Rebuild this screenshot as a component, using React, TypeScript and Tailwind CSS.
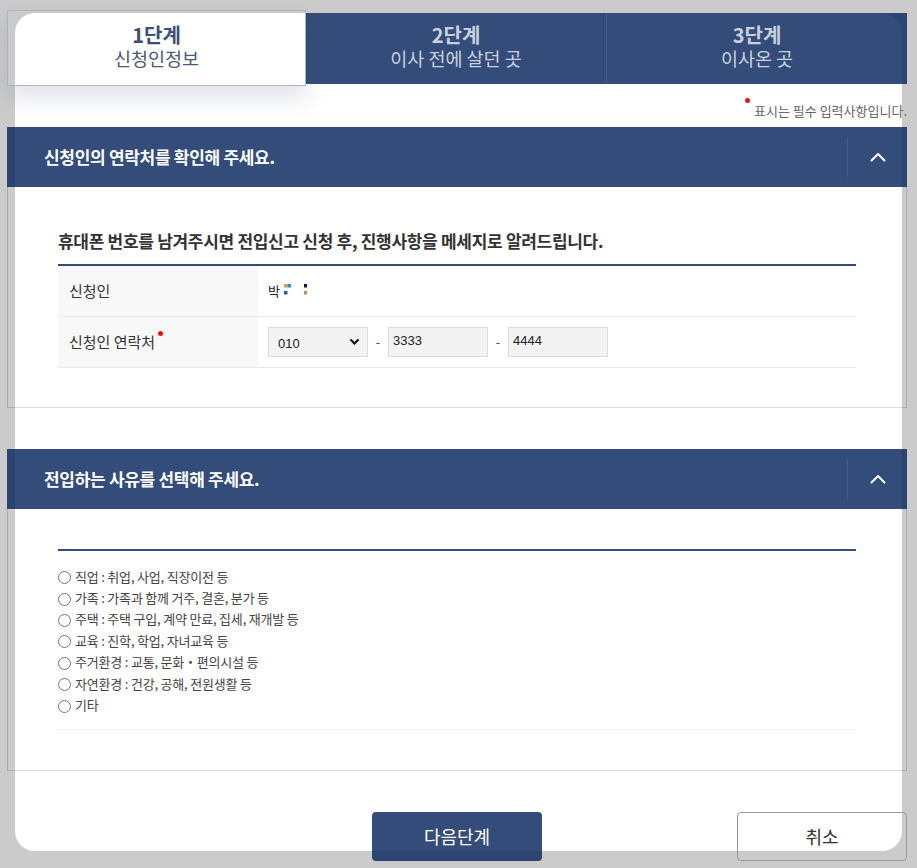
import React from "react";

const reasons = [
  "직업 : 취업, 사업, 직장이전 등",
  "가족 : 가족과 함께 거주, 결혼, 분가 등",
  "주택 : 주택 구입, 계약 만료, 집세, 재개발 등",
  "교육 : 진학, 학업, 자녀교육 등",
  "주거환경 : 교통, 문화・편의시설 등",
  "자연환경 : 건강, 공해, 전원생활 등",
  "기타",
];

function Chevron() {
  return (
    <svg width="16" height="10" viewBox="0 0 16 10" fill="none">
      <polyline points="1.5,8.5 8,2 14.5,8.5" stroke="white" strokeWidth="2" strokeLinecap="round" strokeLinejoin="round" />
    </svg>
  );
}

function SectionHeader({ title }: { title: string }) {
  return (
    <div className="h-[60px] bg-[rgba(15,45,97,0.85)] flex items-center">
      <h2 className="flex-1 pl-[37px] text-white text-[17px] font-bold tracking-[-0.3px] leading-[24px]">{title}</h2>
      <div className="w-px h-[40px] bg-white/10" />
      <button className="w-[59px] h-full flex items-center justify-center">
        <Chevron />
      </button>
    </div>
  );
}

function Tab({ step, label, first, divider }: { step: string; label: string; first?: boolean; divider?: boolean }) {
  if (first) {
    return (
      <div className="relative w-[299px] flex flex-col items-center pt-[10px]">
        <div className="absolute left-0 right-0 top-[-3px] bottom-[-2px] border border-[#aab3c4] shadow-[0_12px_22px_rgba(60,80,120,0.16)]" />
        <span className="relative text-[20px] font-bold leading-[23px] text-[#3b4f77]">{step}</span>
        <span className="relative text-[18.5px] leading-[25px] text-[#4a5a79]">{label}</span>
      </div>
    );
  }
  return (
    <div
      className={
        "flex-1 flex flex-col items-center pt-[10px] bg-[rgba(15,45,97,0.85)] " +
        (divider ? "border-l border-white/10" : "")
      }
    >
      <span className="text-[20px] font-bold leading-[23px] text-[#c9d1de]">{step}</span>
      <span className="text-[18.5px] leading-[25px] text-[#c9d1de]">{label}</span>
    </div>
  );
}

function Masked() {
  return (
    <svg width="26" height="14" viewBox="0 0 26 14">
      <rect x="3" y="0" width="3.5" height="3.5" fill="#e09a3c" />
      <rect x="6.5" y="0" width="3.5" height="3.5" fill="#1c8fd6" />
      <rect x="3" y="7" width="3.5" height="3.5" fill="#1565b5" />
      <rect x="23" y="0" width="3.5" height="3.5" fill="#0d1450" />
      <rect x="23" y="7" width="3.5" height="3.5" fill="#c48a5a" />
    </svg>
  );
}

export default function App() {
  return (
    <div className="min-h-[868px] bg-[#cbcbcb] pt-[14px] pl-[15px] overflow-hidden font-['Noto_Sans_CJK_KR','Noto_Sans',sans-serif] text-[#333]">
      <div className="w-[887px] h-[838px] bg-white rounded-[20px]">
        <div className="ml-[-8px] mt-[-1px] w-[900px]">
          {/* tabs */}
          <div className="flex h-[71px]">
            <Tab first step="1단계" label="신청인정보" />
            <Tab step="2단계" label="이사 전에 살던 곳" />
            <Tab step="3단계" label="이사온 곳" divider />
          </div>

          {/* required note */}
          <div className="h-[43px] flex justify-end items-end pb-[7px]">
            <span className="relative text-[13px] leading-[18px] text-[#666]">
              <span className="absolute left-[-9px] top-[-4px] w-[5px] h-[5px] rounded-full bg-[#f01010]" />
              표시는 필수 입력사항입니다.
            </span>
          </div>

          {/* section 1 */}
          <section>
            <SectionHeader title="신청인의 연락처를 확인해 주세요." />
            <div className="border-x border-b border-black/15 px-[50px] pt-[42px] pb-[39px]">
              <p className="text-[17px] font-bold tracking-[-0.3px] leading-[24px] text-[#333] mb-[11px]">
                휴대폰 번호를 남겨주시면 전입신고 신청 후, 진행사항을 메세지로 알려드립니다.
              </p>
              <div className="border-t-2 border-[#334d79]">
                <div className="grid grid-cols-[200px_1fr] h-[51px] border-b border-[#e9e9e9]">
                  <div className="bg-[#f8f8f8] pl-[11px] flex items-center text-[15px] text-[#333]">신청인</div>
                  <div className="pl-[10px] flex items-center gap-[1px]">
                    <span className="text-[13px] text-[#222]">박</span>
                    <Masked />
                  </div>
                </div>
                <div className="grid grid-cols-[200px_1fr] h-[51px] border-b border-[#e9e9e9]">
                  <div className="bg-[#f8f8f8] pl-[11px] flex items-center text-[15px] text-[#333]">
                    <span className="relative">
                      신청인 연락처
                      <span className="absolute right-[-8px] top-[0px] w-[5px] h-[5px] rounded-full bg-[#f01010]" />
                    </span>
                  </div>
                  <div className="pl-[10px] flex items-center">
                    <div className="relative w-[100px] h-[30px]">
                      <select
                        defaultValue="010"
                        className="appearance-none w-full h-full border border-[#dcdcdc] bg-[#f3f3f3] pl-[9px] pt-[3px] text-[13px] text-[#222] font-['Liberation_Sans',sans-serif] outline-none"
                      >
                        <option>010</option>
                        <option>011</option>
                        <option>016</option>
                      </select>
                      <svg className="absolute right-[8px] top-[11px] pointer-events-none" width="11" height="8" viewBox="0 0 11 8" fill="none">
                        <polyline points="1.5,1.5 5.5,5.5 9.5,1.5" stroke="#111" strokeWidth="2.2" />
                      </svg>
                    </div>
                    <span className="w-[20px] text-center text-[13px] text-[#555]">-</span>
                    <input
                      readOnly
                      value="3333"
                      className="w-[100px] h-[30px] border border-[#dcdcdc] bg-[#f3f3f3] px-[4px] pb-[3px] text-[13px] text-[#222] font-['Liberation_Sans',sans-serif] outline-none"
                    />
                    <span className="w-[20px] text-center text-[13px] text-[#555]">-</span>
                    <input
                      readOnly
                      value="4444"
                      className="w-[100px] h-[30px] border border-[#dcdcdc] bg-[#f3f3f3] px-[4px] pb-[3px] text-[13px] text-[#222] font-['Liberation_Sans',sans-serif] outline-none"
                    />
                  </div>
                </div>
              </div>
            </div>
          </section>

          {/* section 2 */}
          <section className="mt-[41px]">
            <SectionHeader title="전입하는 사유를 선택해 주세요." />
            <div className="border-x border-b border-black/15 px-[50px] pt-[40px] pb-[40px]">
              <div className="border-t-2 border-[#334d79]" />
              <ul className="pt-[16px] pb-[12px] border-b border-[#eeeeee]">
                {reasons.map((r) => (
                  <li key={r} className="h-[21.4px] flex items-center">
                    <span className="w-[13px] h-[13px] rounded-full border border-[#777] bg-white shrink-0" />
                    <span className="ml-[4px] text-[13px] tracking-[-0.2px] leading-[16px] text-[#444] mt-[-2px]">{r}</span>
                  </li>
                ))}
              </ul>
            </div>
          </section>

          {/* buttons */}
          <div className="mt-[41px] grid grid-cols-[1fr_170px_1fr] h-[49px]">
            <div />
            <button className="h-full rounded-[4px] bg-[rgba(15,45,97,0.85)] text-white text-[18px] leading-none">다음단계</button>
            <div className="flex justify-end">
              <button className="w-[170px] h-full rounded-[4px] border border-[#999] text-[18px] text-[#333] leading-none">취소</button>
            </div>
          </div>
        </div>
      </div>
    </div>
  );
}
